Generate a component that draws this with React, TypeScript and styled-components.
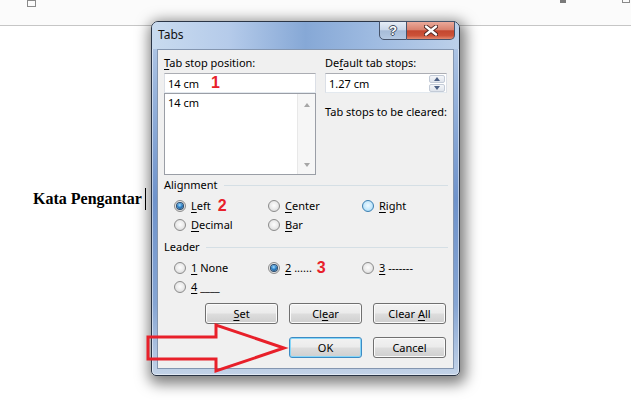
import React from "react";
import styled, { createGlobalStyle, css } from "styled-components";

const GlobalStyle = createGlobalStyle`
  html, body {
    margin: 0;
    padding: 0;
    background: #ffffff;
  }
  body {
    font-family: "Noto Sans", "Liberation Sans", sans-serif;
  }
`;

const UI_FONT = `"Noto Sans", "Liberation Sans", sans-serif`;

const Page = styled.div`
  position: relative;
  width: 631px;
  height: 413px;
  overflow: hidden;
  background: #ffffff;
`;

// Word ruler / ribbon edge

const RulerStrip = styled.div`
  display: flex;
  align-items: flex-start;
  height: 25px;
  padding-left: 27px;
  border-bottom: 1px solid #c6c6c6;
  background: #fbfbfb;
`;

const MarginMark = styled.span`
  width: 7px;
  height: 5px;
  border: 1px solid #8a8a8a;
  border-top-width: 2px;
  margin-top: -1px;
`;

const TabMark = styled.span`
  width: 6px;
  height: 3px;
  margin-left: 524px;
  background: #7a7a7a;
`;

const IndentMark = styled.span`
  width: 6px;
  height: 2px;
  margin-left: 56px;
  border: 1px solid #8a8a8a;
  border-top: none;
`;

// document

const DocBody = styled.div`
  display: flex;
  align-items: center;
  padding: 162px 0 0 33px;
`;

const Heading = styled.span`
  font-family: "Liberation Serif", "Times New Roman", serif;
  font-weight: bold;
  font-size: 16px;
  line-height: 22px;
  color: #000;
`;

const Caret = styled.span`
  width: 1px;
  height: 22px;
  margin-left: 3px;
  background: #000;
`;

// dialog window

const Dialog = styled.div`
  position: absolute;
  left: 151px;
  top: 21px;
  width: 309px;
  height: 355px;
  box-sizing: border-box;
  display: flex;
  flex-direction: column;
  padding: 0 5px 6px 5px;
  border: 1px solid #2a3546;
  border-radius: 7px 7px 5px 5px;
  background: linear-gradient(
    180deg,
    #b9cde8 0%,
    #98b4dc 20%,
    #6f93cb 50%,
    #86a5d3 80%,
    #c3d3e8 100%
  );
  box-shadow: inset 0 0 0 1px rgba(255, 255, 255, 0.5),
    2px 4px 14px 4px rgba(0, 0, 0, 0.5);
`;

const TitleBar = styled.div`
  display: flex;
  align-items: flex-start;
  height: 27px;
  margin: 0 -5px;
  padding: 0 4px 0 6px;
  border-radius: 6px 6px 0 0;
  background: linear-gradient(
    90deg,
    #c9dbef 0%,
    #b5cbea 25%,
    #86a8d6 50%,
    #9cb9e0 70%,
    #bcd0ea 100%
  );
`;

const Title = styled.span`
  flex: 1;
  padding-top: 5px;
  font-family: ${UI_FONT};
  font-size: 12px;
  line-height: 16px;
  color: #111;
`;

const CaptionButton = styled.div<{ $close?: boolean }>`
  display: flex;
  align-items: center;
  justify-content: center;
  box-sizing: border-box;
  height: 19px;
  margin-top: -1px;
  border: 1px solid #46536a;
  ${(p) =>
    p.$close
      ? css`
          width: 48px;
          border-left: none;
          border-radius: 0 0 5px 0;
          background: linear-gradient(
            180deg,
            #eaa99a 0%,
            #d9826f 45%,
            #c4472f 52%,
            #cc5238 80%,
            #e38a70 100%
          );
        `
      : css`
          width: 28px;
          border-radius: 0 0 0 5px;
          background: linear-gradient(
            180deg,
            #e6edf6 0%,
            #cbd8ea 45%,
            #a7bcd8 52%,
            #b4c8e2 100%
          );
        `}
`;

const HelpGlyph = styled.span`
  font-family: "Liberation Sans", sans-serif;
  font-weight: bold;
  font-size: 13px;
  line-height: 13px;
  color: #fff;
  text-shadow: 1px 0 0 #3e4a5c, -1px 0 0 #3e4a5c, 0 1px 0 #3e4a5c,
    0 -1px 0 #3e4a5c;
`;

const Client = styled.div`
  flex: 1;
  display: flex;
  flex-direction: column;
  padding: 6px 0 0 6px;
  border: 1px solid #8496b0;
  background: #f0f0f0;
  font-family: ${UI_FONT};
  font-size: 11px;
  color: #000;
`;

const TopSection = styled.div`
  display: flex;
  gap: 9px;
`;

const Column = styled.div<{ $width: number }>`
  display: flex;
  flex-direction: column;
  width: ${(p) => p.$width}px;
`;

const FieldLabel = styled.div<{ $gap?: number }>`
  height: 14px;
  line-height: 14px;
  margin-top: ${(p) => p.$gap ?? 0}px;
  margin-bottom: 3px;
  white-space: nowrap;
`;

const TextBox = styled.div`
  display: flex;
  align-items: center;
  box-sizing: border-box;
  height: 20px;
  padding-left: 3px;
  border: 1px solid #abadb3;
  border-left-color: #dbdfe6;
  border-right-color: #dbdfe6;
  border-bottom-color: #e3e9ef;
  background: #fff;
  white-space: nowrap;
`;

const Marker = styled.span<{ $gap: number }>`
  margin-left: ${(p) => p.$gap}px;
  font-family: "Liberation Sans", Arial, sans-serif;
  font-weight: bold;
  font-size: 16px;
  line-height: 14px;
  color: #e8202a;
`;

const ListBox = styled.div`
  display: flex;
  box-sizing: border-box;
  height: 82px;
  border: 1px solid #9a9ea6;
  background: #fff;
`;

const ListItems = styled.div`
  flex: 1;
  padding: 2px 0 0 3px;
  line-height: 14px;
`;

const ScrollTrack = styled.div`
  display: flex;
  flex-direction: column;
  justify-content: space-between;
  align-items: center;
  width: 17px;
  padding: 9px 0 7px;
  border-left: 1px solid #e8e8e8;
  background: #f6f6f6;
`;

const Arrow = styled.span<{ $down?: boolean; $color: string }>`
  width: 0;
  height: 0;
  border-left: 3px solid transparent;
  border-right: 3px solid transparent;
  ${(p) =>
    p.$down
      ? css`
          border-top: 4px solid ${p.$color};
        `
      : css`
          border-bottom: 4px solid ${p.$color};
        `}
`;

const SpinBox = styled(TextBox)`
  justify-content: space-between;
  padding-left: 3px;
  padding-right: 0;
`;

const SpinButtons = styled.div`
  display: flex;
  flex-direction: column;
  gap: 1px;
  padding: 0 1px;
`;

const SpinButton = styled.div`
  display: flex;
  align-items: center;
  justify-content: center;
  box-sizing: border-box;
  width: 16px;
  height: 8px;
  border: 1px solid #c3cbd7;
  border-radius: 2px;
  background: linear-gradient(180deg, #f4f6f9 0%, #dfe4ec 100%);
`;

// alignment / leader groups

const GroupHeader = styled.div<{ $top: number }>`
  display: flex;
  align-items: center;
  gap: 6px;
  height: 14px;
  margin-top: ${(p) => p.$top}px;
  padding-right: 5px;
  line-height: 14px;
`;

const GroupRule = styled.span`
  flex: 1;
  height: 1px;
  background: #d5dfe5;
`;

const RadioGrid = styled.div`
  display: grid;
  grid-template-columns: 94px 94px 1fr;
  grid-auto-rows: 19px;
  margin-top: 4px;
  padding-left: 10px;
`;

const RadioItem = styled.label`
  display: flex;
  align-items: center;
  gap: 5px;
  white-space: nowrap;
`;

const RadioCircle = styled.span<{ $checked?: boolean; $hot?: boolean }>`
  display: flex;
  align-items: center;
  justify-content: center;
  flex: none;
  box-sizing: border-box;
  width: 12px;
  height: 12px;
  border-radius: 50%;
  border: 1px solid #8c8c8c;
  background: radial-gradient(
    circle at 50% 45%,
    #fdfdfd 0%,
    #ebebeb 50%,
    #cdcdcd 100%
  );
  ${(p) =>
    p.$hot &&
    css`
      border-color: #3c7fb1;
      background: radial-gradient(
        circle at 50% 45%,
        #eef9ff 0%,
        #c4e8fc 55%,
        #86c8ee 100%
      );
    `}
  &::after {
    content: "";
    display: ${(p) => (p.$checked ? "block" : "none")};
    width: 6px;
    height: 6px;
    border-radius: 50%;
    background: radial-gradient(
      circle at 45% 35%,
      #a8e0ff 0%,
      #2f82c8 45%,
      #123f6a 100%
    );
    box-shadow: 0 0 0 1px #2b4c6e;
  }
`;

const Key = styled.span`
  text-decoration: underline;
  text-underline-offset: 2px;
`;

const ButtonRow = styled.div<{ $top: number }>`
  display: flex;
  justify-content: flex-end;
  gap: 11px;
  margin-top: ${(p) => p.$top}px;
  padding-right: 7px;
`;

const PushButton = styled.div<{ $default?: boolean }>`
  display: flex;
  align-items: center;
  justify-content: center;
  box-sizing: border-box;
  width: 73px;
  height: 21px;
  border: 1px solid #707070;
  border-radius: 3px;
  background: linear-gradient(
    180deg,
    #f2f2f2 0%,
    #ebebeb 48%,
    #dddddd 52%,
    #cfcfcf 100%
  );
  box-shadow: inset 0 0 0 1px #fbfbfb;
  white-space: nowrap;
  ${(p) =>
    p.$default &&
    css`
      border-color: #3c8bc4;
      box-shadow: inset 0 0 0 1px #86d6f8;
    `}
`;

const Overlay = styled.svg`
  position: absolute;
  left: 0;
  top: 0;
  pointer-events: none;
`;

const App: React.FC = () => {
  return (
    <Page>
      <GlobalStyle />
      <RulerStrip>
        <MarginMark />
        <TabMark />
        <IndentMark />
      </RulerStrip>
      <DocBody>
        <Heading>Kata Pengantar</Heading>
        <Caret />
      </DocBody>

      <Dialog>
        <TitleBar>
          <Title>Tabs</Title>
          <CaptionButton>
            <HelpGlyph>?</HelpGlyph>
          </CaptionButton>
          <CaptionButton $close>
            <svg width="14" height="11" viewBox="0 0 14 11">
              <path
                d="M2 1.5 L12 9.5 M12 1.5 L2 9.5"
                stroke="#4a2420"
                strokeWidth="4.2"
                strokeLinecap="round"
              />
              <path
                d="M2 1.5 L12 9.5 M12 1.5 L2 9.5"
                stroke="#ffffff"
                strokeWidth="2.4"
                strokeLinecap="round"
              />
            </svg>
          </CaptionButton>
        </TitleBar>

        <Client>
          <TopSection>
            <Column $width={152}>
              <FieldLabel>
                <Key>T</Key>ab stop position:
              </FieldLabel>
              <TextBox>
                14 cm
                <Marker $gap={12}>1</Marker>
              </TextBox>
              <ListBox>
                <ListItems>14 cm</ListItems>
                <ScrollTrack>
                  <Arrow $color="#a6a6a6" />
                  <Arrow $down $color="#a6a6a6" />
                </ScrollTrack>
              </ListBox>
            </Column>
            <Column $width={122}>
              <FieldLabel>
                De<Key>f</Key>ault tab stops:
              </FieldLabel>
              <SpinBox>
                1.27 cm
                <SpinButtons>
                  <SpinButton>
                    <Arrow $color="#4d6185" />
                  </SpinButton>
                  <SpinButton>
                    <Arrow $down $color="#4d6185" />
                  </SpinButton>
                </SpinButtons>
              </SpinBox>
              <FieldLabel $gap={12}>Tab stops to be cleared:</FieldLabel>
            </Column>
          </TopSection>

          <GroupHeader $top={3}>
            Alignment
            <GroupRule />
          </GroupHeader>
          <RadioGrid>
            <RadioItem>
              <RadioCircle $checked />
              <span>
                <Key>L</Key>eft
              </span>
              <Marker $gap={2}>2</Marker>
            </RadioItem>
            <RadioItem>
              <RadioCircle />
              <span>
                <Key>C</Key>enter
              </span>
            </RadioItem>
            <RadioItem>
              <RadioCircle $hot />
              <span>
                <Key>R</Key>ight
              </span>
            </RadioItem>
            <RadioItem>
              <RadioCircle />
              <span>
                <Key>D</Key>ecimal
              </span>
            </RadioItem>
            <RadioItem>
              <RadioCircle />
              <span>
                <Key>B</Key>ar
              </span>
            </RadioItem>
          </RadioGrid>

          <GroupHeader $top={6}>
            Leader
            <GroupRule />
          </GroupHeader>
          <RadioGrid>
            <RadioItem>
              <RadioCircle />
              <span>
                <Key>1</Key> None
              </span>
            </RadioItem>
            <RadioItem>
              <RadioCircle $checked />
              <span>
                <Key>2</Key> ......
              </span>
              <Marker $gap={0}>3</Marker>
            </RadioItem>
            <RadioItem>
              <RadioCircle />
              <span>
                <Key>3</Key> -------
              </span>
            </RadioItem>
            <RadioItem>
              <RadioCircle />
              <span>
                <Key>4</Key> ____
              </span>
            </RadioItem>
          </RadioGrid>

          <ButtonRow $top={7}>
            <PushButton>
              <span>
                <Key>S</Key>et
              </span>
            </PushButton>
            <PushButton>
              <span>
                Cl<Key>e</Key>ar
              </span>
            </PushButton>
            <PushButton>
              <span>
                Clear <Key>A</Key>ll
              </span>
            </PushButton>
          </ButtonRow>
          <ButtonRow $top={13}>
            <PushButton $default>OK</PushButton>
            <PushButton>Cancel</PushButton>
          </ButtonRow>
        </Client>
      </Dialog>

      <Overlay width="631" height="413" viewBox="0 0 631 413">
        <polygon
          points="148,337 216,337 216,325 284,348 216,371 216,359 148,359"
          fill="none"
          stroke="#e8202a"
          strokeWidth="3"
          strokeLinejoin="miter"
        />
      </Overlay>
    </Page>
  );
};

export default App;
